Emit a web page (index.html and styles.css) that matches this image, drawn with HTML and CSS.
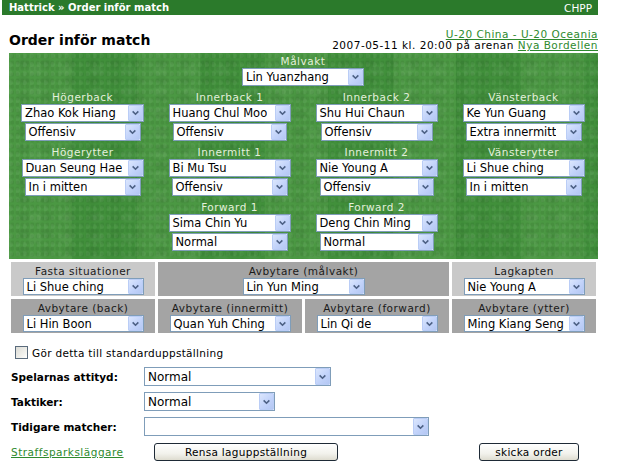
FILE: index.html
```html
<!DOCTYPE html>
<html lang="sv">
<head>
<meta charset="utf-8">
<title>Order inför match</title>
<link rel="stylesheet" href="styles.css">
</head>
<body>
<div class="page">
  <div class="topbar"><span class="crumb">Hattrick » Order inför match</span><span class="chpp">CHPP</span></div>

  <div class="head">
    <h1 class="title">Order inför match</h1>
    <div class="matchinfo">
      <a class="lnk" href="#">U-20 China - U-20 Oceania</a><br>
      2007-05-11 kl. 20:00 på arenan <a class="lnk" href="#">Nya Bordellen</a>
    </div>
  </div>

  <div class="field">
    <div class="pos goalie">
      <div class="plabel">Målvakt</div>
      <div class="sel w122"><span class="v">Lin Yuanzhang</span><span class="arr"><svg viewBox="0 0 16 16"><path d="M4.5 6 L8 9.5 L11.5 6" /></svg></span></div>
    </div>

    <div class="pos">
      <div class="plabel">Högerback</div>
      <div class="sel w123"><span class="v">Zhao Kok Hiang</span><span class="arr"><svg viewBox="0 0 16 16"><path d="M4.5 6 L8 9.5 L11.5 6" /></svg></span></div>
      <div class="sel t w116"><span class="v">Offensiv</span><span class="arr"><svg viewBox="0 0 16 16"><path d="M4.5 6 L8 9.5 L11.5 6" /></svg></span></div>
    </div>
    <div class="pos">
      <div class="plabel">Innerback 1</div>
      <div class="sel w122"><span class="v">Huang Chul Moo</span><span class="arr"><svg viewBox="0 0 16 16"><path d="M4.5 6 L8 9.5 L11.5 6" /></svg></span></div>
      <div class="sel t w114"><span class="v">Offensiv</span><span class="arr"><svg viewBox="0 0 16 16"><path d="M4.5 6 L8 9.5 L11.5 6" /></svg></span></div>
    </div>
    <div class="pos">
      <div class="plabel">Innerback 2</div>
      <div class="sel w122"><span class="v">Shu Hui Chaun</span><span class="arr"><svg viewBox="0 0 16 16"><path d="M4.5 6 L8 9.5 L11.5 6" /></svg></span></div>
      <div class="sel t w112"><span class="v">Offensiv</span><span class="arr"><svg viewBox="0 0 16 16"><path d="M4.5 6 L8 9.5 L11.5 6" /></svg></span></div>
    </div>
    <div class="pos">
      <div class="plabel">Vänsterback</div>
      <div class="sel w122"><span class="v">Ke Yun Guang</span><span class="arr"><svg viewBox="0 0 16 16"><path d="M4.5 6 L8 9.5 L11.5 6" /></svg></span></div>
      <div class="sel t w116"><span class="v">Extra innermitt</span><span class="arr"><svg viewBox="0 0 16 16"><path d="M4.5 6 L8 9.5 L11.5 6" /></svg></span></div>
    </div>

    <div class="pos">
      <div class="plabel">Högerytter</div>
      <div class="sel w122"><span class="v">Duan Seung Hae</span><span class="arr"><svg viewBox="0 0 16 16"><path d="M4.5 6 L8 9.5 L11.5 6" /></svg></span></div>
      <div class="sel t w116"><span class="v">In i mitten</span><span class="arr"><svg viewBox="0 0 16 16"><path d="M4.5 6 L8 9.5 L11.5 6" /></svg></span></div>
    </div>
    <div class="pos">
      <div class="plabel">Innermitt 1</div>
      <div class="sel w122"><span class="v">Bi Mu Tsu</span><span class="arr"><svg viewBox="0 0 16 16"><path d="M4.5 6 L8 9.5 L11.5 6" /></svg></span></div>
      <div class="sel t w116"><span class="v">Offensiv</span><span class="arr"><svg viewBox="0 0 16 16"><path d="M4.5 6 L8 9.5 L11.5 6" /></svg></span></div>
    </div>
    <div class="pos">
      <div class="plabel">Innermitt 2</div>
      <div class="sel w122"><span class="v">Nie Young A</span><span class="arr"><svg viewBox="0 0 16 16"><path d="M4.5 6 L8 9.5 L11.5 6" /></svg></span></div>
      <div class="sel t w114"><span class="v">Offensiv</span><span class="arr"><svg viewBox="0 0 16 16"><path d="M4.5 6 L8 9.5 L11.5 6" /></svg></span></div>
    </div>
    <div class="pos">
      <div class="plabel">Vänsterytter</div>
      <div class="sel w122"><span class="v">Li Shue ching</span><span class="arr"><svg viewBox="0 0 16 16"><path d="M4.5 6 L8 9.5 L11.5 6" /></svg></span></div>
      <div class="sel t w116"><span class="v">In i mitten</span><span class="arr"><svg viewBox="0 0 16 16"><path d="M4.5 6 L8 9.5 L11.5 6" /></svg></span></div>
    </div>

    <div class="pos c2">
      <div class="plabel">Forward 1</div>
      <div class="sel w122"><span class="v">Sima Chin Yu</span><span class="arr"><svg viewBox="0 0 16 16"><path d="M4.5 6 L8 9.5 L11.5 6" /></svg></span></div>
      <div class="sel t w116"><span class="v">Normal</span><span class="arr"><svg viewBox="0 0 16 16"><path d="M4.5 6 L8 9.5 L11.5 6" /></svg></span></div>
    </div>
    <div class="pos c3">
      <div class="plabel">Forward 2</div>
      <div class="sel w122"><span class="v">Deng Chin Ming</span><span class="arr"><svg viewBox="0 0 16 16"><path d="M4.5 6 L8 9.5 L11.5 6" /></svg></span></div>
      <div class="sel t w114"><span class="v">Normal</span><span class="arr"><svg viewBox="0 0 16 16"><path d="M4.5 6 L8 9.5 L11.5 6" /></svg></span></div>
    </div>
  </div>

  <div class="subs">
    <div class="box light">
      <div class="blabel">Fasta situationer</div>
      <div class="sel w120"><span class="v">Li Shue ching</span><span class="arr"><svg viewBox="0 0 16 16"><path d="M4.5 6 L8 9.5 L11.5 6" /></svg></span></div>
    </div>
    <div class="box dark span2">
      <div class="blabel">Avbytare (målvakt)</div>
      <div class="sel w121"><span class="v">Lin Yun Ming</span><span class="arr"><svg viewBox="0 0 16 16"><path d="M4.5 6 L8 9.5 L11.5 6" /></svg></span></div>
    </div>
    <div class="box light">
      <div class="blabel">Lagkapten</div>
      <div class="sel w120"><span class="v">Nie Young A</span><span class="arr"><svg viewBox="0 0 16 16"><path d="M4.5 6 L8 9.5 L11.5 6" /></svg></span></div>
    </div>
    <div class="box dark">
      <div class="blabel">Avbytare (back)</div>
      <div class="sel w120"><span class="v">Li Hin Boon</span><span class="arr"><svg viewBox="0 0 16 16"><path d="M4.5 6 L8 9.5 L11.5 6" /></svg></span></div>
    </div>
    <div class="box dark">
      <div class="blabel">Avbytare (innermitt)</div>
      <div class="sel w120"><span class="v">Quan Yuh Ching</span><span class="arr"><svg viewBox="0 0 16 16"><path d="M4.5 6 L8 9.5 L11.5 6" /></svg></span></div>
    </div>
    <div class="box dark">
      <div class="blabel">Avbytare (forward)</div>
      <div class="sel w120"><span class="v">Lin Qi de</span><span class="arr"><svg viewBox="0 0 16 16"><path d="M4.5 6 L8 9.5 L11.5 6" /></svg></span></div>
    </div>
    <div class="box dark">
      <div class="blabel">Avbytare (ytter)</div>
      <div class="sel w120"><span class="v">Ming Kiang Seng</span><span class="arr"><svg viewBox="0 0 16 16"><path d="M4.5 6 L8 9.5 L11.5 6" /></svg></span></div>
    </div>
  </div>

  <div class="check"><span class="cb"></span><span>Gör detta till standarduppställning</span></div>

  <div class="frow first">
    <span class="flabel">Spelarnas attityd:</span>
    <div class="sel big w187"><span class="v">Normal</span><span class="arr"><svg viewBox="0 0 16 16"><path d="M4.5 6 L8 9.5 L11.5 6" /></svg></span></div>
  </div>
  <div class="frow">
    <span class="flabel">Taktiker:</span>
    <div class="sel big w131"><span class="v">Normal</span><span class="arr"><svg viewBox="0 0 16 16"><path d="M4.5 6 L8 9.5 L11.5 6" /></svg></span></div>
  </div>
  <div class="frow">
    <span class="flabel">Tidigare matcher:</span>
    <div class="sel big w285"><span class="v"></span><span class="arr"><svg viewBox="0 0 16 16"><path d="M4.5 6 L8 9.5 L11.5 6" /></svg></span></div>
  </div>

  <div class="actions">
    <a class="lnk straff" href="#">Straffsparksläggare</a>
    <span class="btn rensa">Rensa laguppställning</span>
    <span class="btn skicka">skicka order</span>
  </div>
</div>
</body>
</html>
```

FILE: styles.css
```css
html, body {
  margin: 0;
  padding: 0;
  background: #ffffff;
}
body {
  font-family: "DejaVu Sans", Verdana, sans-serif;
  color: #000;
}
.page {
  width: 629px;
  height: 472px;
  overflow: hidden;
}
.topbar {
  margin-left: 2px;
  width: 596px;
  height: 15px;
  background: #2b7a2b;
  color: #fff;
  display: flex;
  justify-content: space-between;
  align-items: center;
  padding: 0 6px 0 7px;
  box-sizing: border-box;
}
.crumb {
  font-size: 10px;
  font-weight: bold;
}
.chpp {
  font-size: 10.5px;
}
.head {
  margin-left: 9px;
  width: 589px;
  height: 38px;
  display: flex;
  justify-content: space-between;
  align-items: flex-end;
  box-sizing: border-box;
  padding-bottom: 2px;
}
.title {
  margin: 0;
  font-size: 14px;
  font-weight: bold;
  line-height: 16px;
  padding-bottom: 3px;
}
.matchinfo {
  text-align: right;
  font-size: 10.5px;
  letter-spacing: 0.5px;
  line-height: 11px;
}
.lnk {
  color: #2e8a2e;
  text-decoration: underline;
}
.field {
  margin-left: 9px;
  width: 589px;
  height: 206px;
  box-sizing: border-box;
  padding-top: 2px;
  background:
    radial-gradient(circle at 20% 30%, rgba(255,255,255,0.05) 0 2px, transparent 3px) 0 0 / 7px 9px,
    radial-gradient(circle at 70% 60%, rgba(0,0,0,0.06) 0 1.5px, transparent 2.5px) 0 0 / 5px 6px,
    radial-gradient(ellipse at 50% 50%, rgba(0,0,0,0.05) 0 4px, transparent 8px) 3px 2px / 23px 17px,
    radial-gradient(ellipse at 50% 50%, rgba(255,255,255,0.04) 0 5px, transparent 9px) 11px 7px / 31px 21px,
    repeating-linear-gradient(to right, #4b9843 0 63px, #41903b 63px 128px);
  display: grid;
  grid-template-columns: repeat(4, 147px);
  row-gap: 5px;
  align-content: start;
}
.pos {
  display: flex;
  flex-direction: column;
  align-items: center;
}
.goalie {
  grid-column: 1 / -1;
}
.c2 { grid-column: 2; }
.c3 { grid-column: 3; }
.plabel {
  height: 13px;
  line-height: 13px;
  font-size: 10.5px;
  letter-spacing: 0.5px;
  color: #e4f0dc;
}
.sel {
  height: 18px;
  box-sizing: border-box;
  border: 1px solid #7f9db9;
  background: #fff;
  display: flex;
  align-items: center;
  justify-content: space-between;
  font-size: 11.5px;
  line-height: 16px;
  color: #000;
}
.sel.t {
  margin-top: 1px;
}
.v {
  padding-left: 3px;
  white-space: nowrap;
  overflow: hidden;
}
.arr {
  width: 15px;
  height: 16px;
  flex: none;
  box-sizing: border-box;
  border: 1px solid #bacdf6;
  border-radius: 1px;
  background: linear-gradient(135deg, #dbe6fd 0%, #c2d3fa 55%, #b4c7f3 100%);
  display: flex;
  align-items: center;
  justify-content: center;
}
.arr svg {
  width: 13px;
  height: 14px;
}
.arr path {
  fill: none;
  stroke: #4d6185;
  stroke-width: 2;
}
.w112 { width: 112px; }
.w114 { width: 114px; }
.w116 { width: 116px; }
.w120 { width: 121px; }
.w121 { width: 122px; }
.w122 { width: 122px; }
.w123 { width: 123px; }
.w131 { width: 131px; }
.w187 { width: 187px; }
.w285 { width: 285px; }
.subs {
  margin-left: 11px;
  margin-top: 3px;
  display: grid;
  grid-template-columns: repeat(4, 144px);
  grid-auto-rows: 34px;
  gap: 3px;
}
.box {
  display: flex;
  flex-direction: column;
  align-items: center;
  padding-top: 3px;
  box-sizing: border-box;
}
.box .sel {
  height: 17px;
}
.box .arr {
  height: 15px;
}
.span2 {
  grid-column: span 2;
}
.light { background: #c9c9c9; }
.dark { background: #a4a4a4; }
.blabel {
  height: 13px;
  line-height: 13px;
  font-size: 10.5px;
  letter-spacing: 0.5px;
  color: #1a1a1a;
}
.check {
  margin: 13px 0 0 15px;
  display: flex;
  align-items: center;
  gap: 4px;
  font-size: 10.5px;
  letter-spacing: 0.3px;
  height: 13px;
}
.cb {
  width: 13px;
  height: 13px;
  box-sizing: border-box;
  border: 1px solid #5a6b7c;
  background: linear-gradient(135deg, #dcdcd6 0%, #f2f2ee 70%, #ffffff 100%);
}
.frow {
  display: flex;
  align-items: center;
  margin-left: 11px;
  height: 19px;
  margin-top: 6px;
}
.frow.first {
  margin-top: 8px;
}
.flabel {
  width: 133px;
  font-size: 10.5px;
  font-weight: bold;
}
.sel.big {
  height: 19px;
  font-size: 12px;
}
.sel.big .arr {
  height: 17px;
}
.actions {
  margin: 7px 0 0 11px;
  display: flex;
  align-items: center;
  height: 18px;
}
.straff {
  font-size: 10.5px;
  letter-spacing: 0.5px;
  width: 143px;
}
.btn {
  height: 18px;
  box-sizing: border-box;
  border: 1px solid #1e2a36;
  border-radius: 3px;
  background: linear-gradient(#ffffff, #f2f2ec 60%, #dedcd0);
  font-size: 10.5px;
  letter-spacing: 0.3px;
  display: flex;
  align-items: center;
  justify-content: center;
}
.rensa {
  width: 184px;
}
.skicka {
  width: 100px;
  margin-left: 141px;
}
```
